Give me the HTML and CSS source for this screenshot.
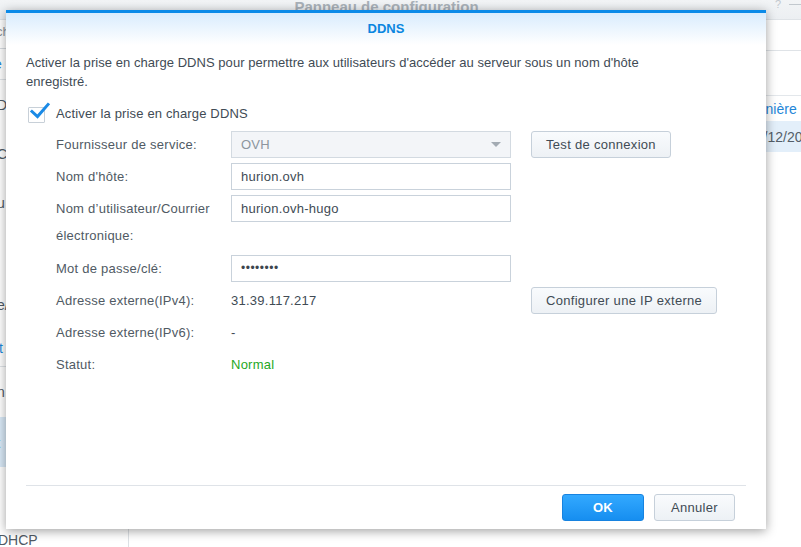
FILE: index.html
```html
<!DOCTYPE html>
<html lang="fr">
<head>
<meta charset="utf-8">
<title>DDNS</title>
<link rel="stylesheet" href="styles.css">
</head>
<body>
<div class="app">
  <header class="app-top">
    <span class="app-title">Panneau de configuration</span>
    <span class="app-tools"><span class="tool-help">?</span><span class="tool-min"></span></span>
  </header>
  <div class="app-body">
    <nav class="sidebar">
      <div class="nav-search"><span class="frag">ch</span></div>
      <div class="nav-cat"><span class="frag">e</span></div>
      <div class="nav-item h50"><span class="frag">D</span></div>
      <div class="nav-item h48"><span class="frag">C</span></div>
      <div class="nav-item h50"><span class="frag">u</span></div>
      <div class="nav-item h52"></div>
      <div class="nav-item h50"><span class="frag">e/</span></div>
      <div class="nav-cat2"><span class="frag">it</span></div>
      <div class="nav-item h50"><span class="frag">n</span></div>
      <div class="nav-item nav-active"><span class="frag">t</span></div>
      <div class="nav-item h60"></div>
      <div class="nav-item nav-last"><span class="frag-full">DHCP</span></div>
    </nav>
    <main class="main">
      <div class="main-tabs"></div>
      <div class="main-toolbar"></div>
      <div class="grid-head"><span class="cell-hidden">Fournisseur</span><span class="cell-head">Dernière mise à jour</span></div>
      <div class="grid-row"><span class="cell-hidden">OVH</span><span class="cell">02/12/2019 10:35</span></div>
    </main>
  </div>
</div>

<div class="dialog">
  <div class="dialog-head">DDNS</div>
  <div class="dialog-body">
    <p class="desc">Activer la prise en charge DDNS pour permettre aux utilisateurs d'accéder au serveur sous un nom d'hôte enregistré.</p>
    <label class="check-row">
      <span class="checkbox">
        <svg width="22" height="18" viewBox="0 0 22 18"><path d="M3 9.5 L8.5 14.5 L19 2.5" fill="none" stroke="#1a8ae6" stroke-width="3" stroke-linecap="square" stroke-linejoin="miter"/></svg>
      </span>
      <span class="check-label">Activer la prise en charge DDNS</span>
    </label>
    <div class="form">
      <div class="f-label">Fournisseur de service:</div>
      <div class="f-field select"><span>OVH</span><span class="arrow"></span></div>
      <div class="f-extra"><button class="btn">Test de connexion</button></div>

      <div class="f-label">Nom d'hôte:</div>
      <div class="f-field input">hurion.ovh</div>
      <div class="f-extra"></div>

      <div class="f-label f-label-multi">Nom d’utilisateur/Courrier électronique:</div>
      <div class="f-field input">hurion.ovh-hugo</div>
      <div class="f-extra"></div>

      <div class="f-label">Mot de passe/clé:</div>
      <div class="f-field input pass">••••••••</div>
      <div class="f-extra"></div>

      <div class="f-label">Adresse externe(IPv4):</div>
      <div class="f-value">31.39.117.217</div>
      <div class="f-extra"><button class="btn">Configurer une IP externe</button></div>

      <div class="f-label">Adresse externe(IPv6):</div>
      <div class="f-value">-</div>
      <div class="f-extra"></div>

      <div class="f-label">Statut:</div>
      <div class="f-value status-ok">Normal</div>
      <div class="f-extra"></div>
    </div>
  </div>
  <div class="dialog-foot">
    <button class="btn btn-primary">OK</button>
    <button class="btn btn-foot">Annuler</button>
  </div>
</div>
</body>
</html>
```

FILE: styles.css
```css
* { box-sizing: border-box; }

html, body {
  margin: 0;
  padding: 0;
}

body {
  width: 801px;
  height: 547px;
  overflow: hidden;
  position: relative;
  background: #ffffff;
  font-family: "Liberation Sans", Arial, sans-serif;
  font-size: 13px;
  color: #414b55;
}

/* ---------- background window ---------- */
.app {
  width: 801px;
  height: 547px;
  display: flex;
  flex-direction: column;
}

.app-top {
  height: 20px;
  flex: none;
  background: linear-gradient(#f2f4f6, #eceff2);
  border-bottom: 1px solid #dfe3e7;
  display: flex;
  justify-content: center;
  position: relative;
}

.app-title {
  font-weight: bold;
  font-size: 15px;
  color: #a9b1b9;
  line-height: 13px;
  margin-right: 28px;
  white-space: nowrap;
}

.app-tools {
  position: absolute;
  right: 0;
  top: 0;
  display: flex;
  align-items: flex-start;
  gap: 8px;
}

.tool-help {
  font-size: 11px;
  line-height: 9px;
  color: #c2c8ce;
}

.tool-min {
  width: 12px;
  height: 1px;
  margin-top: 4px;
  background: #c2c8ce;
}

.app-body {
  flex: 1;
  display: flex;
  min-height: 0;
}

.sidebar {
  flex: none;
  width: 129px;
  border-right: 1px solid #dde1e5;
  display: flex;
  flex-direction: column;
  font-size: 14px;
}

.frag {
  display: block;
  margin-left: -3px;
  color: #505a64;
}

.nav-search {
  flex: none;
  height: 29px;
  border-bottom: 1px solid #d6dbe0;
  line-height: 24px;
}

.nav-search .frag { color: #8d959d; font-size: 13px; margin-left: -4px; }

.nav-cat {
  flex: none;
  height: 31px;
  border-bottom: 1px solid #dfe3e7;
  line-height: 30px;
}

.nav-cat .frag { color: #1f86d8; margin-left: -6px; }

.nav-item {
  flex: none;
  display: flex;
  align-items: center;
}

.h48 { height: 48px; }
.h50 { height: 50px; }
.h52 { height: 52px; }
.h60 { height: 60px; }

.nav-cat2 {
  flex: none;
  height: 37px;
  border-bottom: 1px solid #dfe3e7;
  display: flex;
  align-items: center;
}

.nav-cat2 .frag { color: #1f86d8; margin-left: -4px; }

.nav-active {
  height: 50px;
  background: #d9e9f7;
}

.nav-active .frag { color: #1f86d8; font-size: 15px; margin-left: -4px; }

.nav-last {
  height: 30px;
  align-items: flex-start;
}

.frag-full {
  display: block;
  margin-left: -2px;
  margin-top: 5px;
  color: #505a64;
  font-size: 14px;
}

.main {
  flex: 1;
  min-width: 0;
  display: flex;
  flex-direction: column;
  overflow: hidden;
}

.main-tabs {
  flex: none;
  height: 31px;
  border-bottom: 1px solid #dfe3e7;
}

.main-toolbar {
  flex: none;
  height: 45px;
  border-bottom: 1px solid #e3e7eb;
}

.grid-head,
.grid-row {
  flex: none;
  display: flex;
  align-items: center;
  font-size: 14px;
  padding-left: 12px;
  white-space: nowrap;
}

.grid-head {
  height: 25px;
}

.grid-row {
  height: 31px;
  background: #e3effa;
}

.cell-hidden {
  flex: none;
  width: 602px;
  color: transparent;
}

.grid-row .cell-hidden { width: 607px; }

.cell-head { color: #1f86d8; }

.cell { color: #545e68; }

/* ---------- dialog ---------- */
.dialog {
  position: absolute;
  left: 6px;
  top: 10px;
  width: 760px;
  height: 519px;
  background: #ffffff;
  border-top: 3px solid #0b8ae8;
  box-shadow: 0 2px 10px rgba(0, 0, 0, 0.38);
  display: flex;
  flex-direction: column;
}

.dialog-head {
  height: 32px;
  line-height: 32px;
  text-align: center;
  font-weight: bold;
  font-size: 13px;
  color: #0a86e0;
  background: linear-gradient(#d9ecfd, #ffffff);
}

.dialog-body {
  flex: 1;
  padding: 8px 20px 0 20px;
}

.desc {
  margin: 0;
  line-height: 19px;
  width: 660px;
  letter-spacing: 0.05px;
  color: #414b55;
}

.check-row {
  display: flex;
  align-items: center;
  height: 20px;
  margin-top: 12px;
}

.checkbox {
  width: 17px;
  height: 16px;
  margin-left: 2px;
  margin-top: 4px;
  border: 1px solid #c8d0d8;
  border-radius: 1px;
  position: relative;
  background: #fff;
}

.checkbox svg {
  position: absolute;
  left: 0;
  top: -6px;
}

.check-label {
  margin-left: 11px;
  color: #414b55;
  letter-spacing: 0.15px;
}

.form {
  margin-top: 8px;
  padding-left: 30px;
  display: grid;
  grid-template-columns: 155px 280px auto;
  column-gap: 20px;
  row-gap: 5px;
  align-items: start;
  letter-spacing: 0.25px;
}

.f-label {
  line-height: 27px;
  color: #505a64;
}

.f-label-multi {
  padding-bottom: 1px;
}

.f-field {
  height: 27px;
  border: 1px solid #c9d2db;
  padding: 0 9px;
  line-height: 25px;
  color: #414b55;
}

.select {
  background: #f3f5f8;
  border-color: #d3dae1;
  color: #8d959e;
  display: flex;
  align-items: center;
  justify-content: space-between;
}

.arrow {
  width: 0;
  height: 0;
  border-left: 5px solid transparent;
  border-right: 5px solid transparent;
  border-top: 5px solid #a3abb3;
}

.pass {
  letter-spacing: 0.5px;
  font-size: 12px;
  color: #3c454e;
}

.f-value {
  line-height: 27px;
  color: #414b55;
}

.status-ok {
  color: #25a825;
}

.btn {
  height: 27px;
  padding: 0 14px;
  border: 1px solid #c6d0da;
  border-radius: 3px;
  background: linear-gradient(#f9fbfd, #edf1f5);
  font-family: "Liberation Sans", Arial, sans-serif;
  font-size: 13px;
  letter-spacing: 0.3px;
  color: #414b55;
}

.dialog-foot {
  margin: 0 20px;
  border-top: 1px solid #dfe3e8;
  padding: 8px 11px 8px 0;
  display: flex;
  justify-content: flex-end;
  gap: 10px;
}

.btn-primary {
  width: 82px;
  background: linear-gradient(#33a9ff, #168ef0);
  border-color: #1783e0;
  color: #ffffff;
  font-weight: bold;
}

.btn-foot {
  width: 81px;
}
```
